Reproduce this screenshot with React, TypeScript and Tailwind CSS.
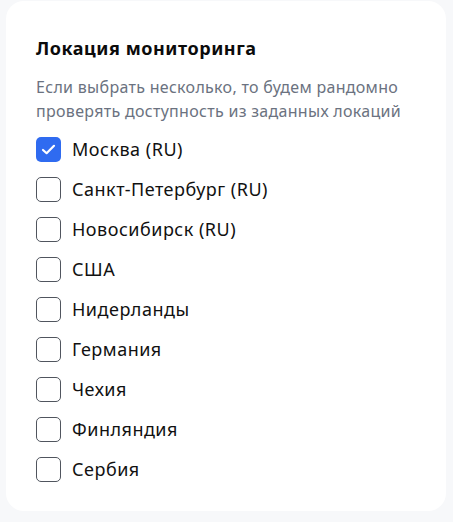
import React from "react";

const items = [
  { label: "Москва (RU)", checked: true },
  { label: "Санкт-Петербург (RU)", checked: false },
  { label: "Новосибирск (RU)", checked: false },
  { label: "США", checked: false },
  { label: "Нидерланды", checked: false },
  { label: "Германия", checked: false },
  { label: "Чехия", checked: false },
  { label: "Финляндия", checked: false },
  { label: "Сербия", checked: false },
];

export default function App() {
  return (
    <div
      className="w-[453px] h-[522px] bg-[#f7f8fa] pl-[6px] pr-[7px] pt-[1px]"
      style={{ fontFamily: '"Noto Sans", "Open Sans", sans-serif' }}
    >
      <div className="bg-white rounded-[18px] h-[510px] pl-[30px] pt-[33px]">
        <div className="text-[18px] leading-[28px] font-bold tracking-[0.55px] text-[#0b0b0b]">Локация мониторинга</div>
        <div className="mt-[13px] text-[16px] leading-[24px] tracking-[0.3px] text-[#6b7280]">
          <div>Если выбрать несколько, то будем рандомно</div>
          <div>проверять доступность из заданных локаций</div>
        </div>
        <div className="mt-[6px] flex flex-col">
          {items.map((it) => (
            <div key={it.label} className="flex items-center h-[40px] gap-[11px]">
              {it.checked ? (
                <div className="w-[25px] h-[25px] rounded-[5px] bg-[#2f6bf0] flex items-center justify-center">
                  <svg width="15" height="15" viewBox="0 0 15 15" fill="none">
                    <path d="M2 8 L5.6 11.2 L13 3.8" stroke="white" strokeWidth="2.2" strokeLinecap="round" strokeLinejoin="round" />
                  </svg>
                </div>
              ) : (
                <div className="w-[25px] h-[25px] rounded-[5px] border-[1.5px] border-[#50555e] bg-white" />
              )}
              <span className="text-[18px] leading-[24px] tracking-[0.5px] text-[#111]">{it.label}</span>
            </div>
          ))}
        </div>
      </div>
    </div>
  );
}
